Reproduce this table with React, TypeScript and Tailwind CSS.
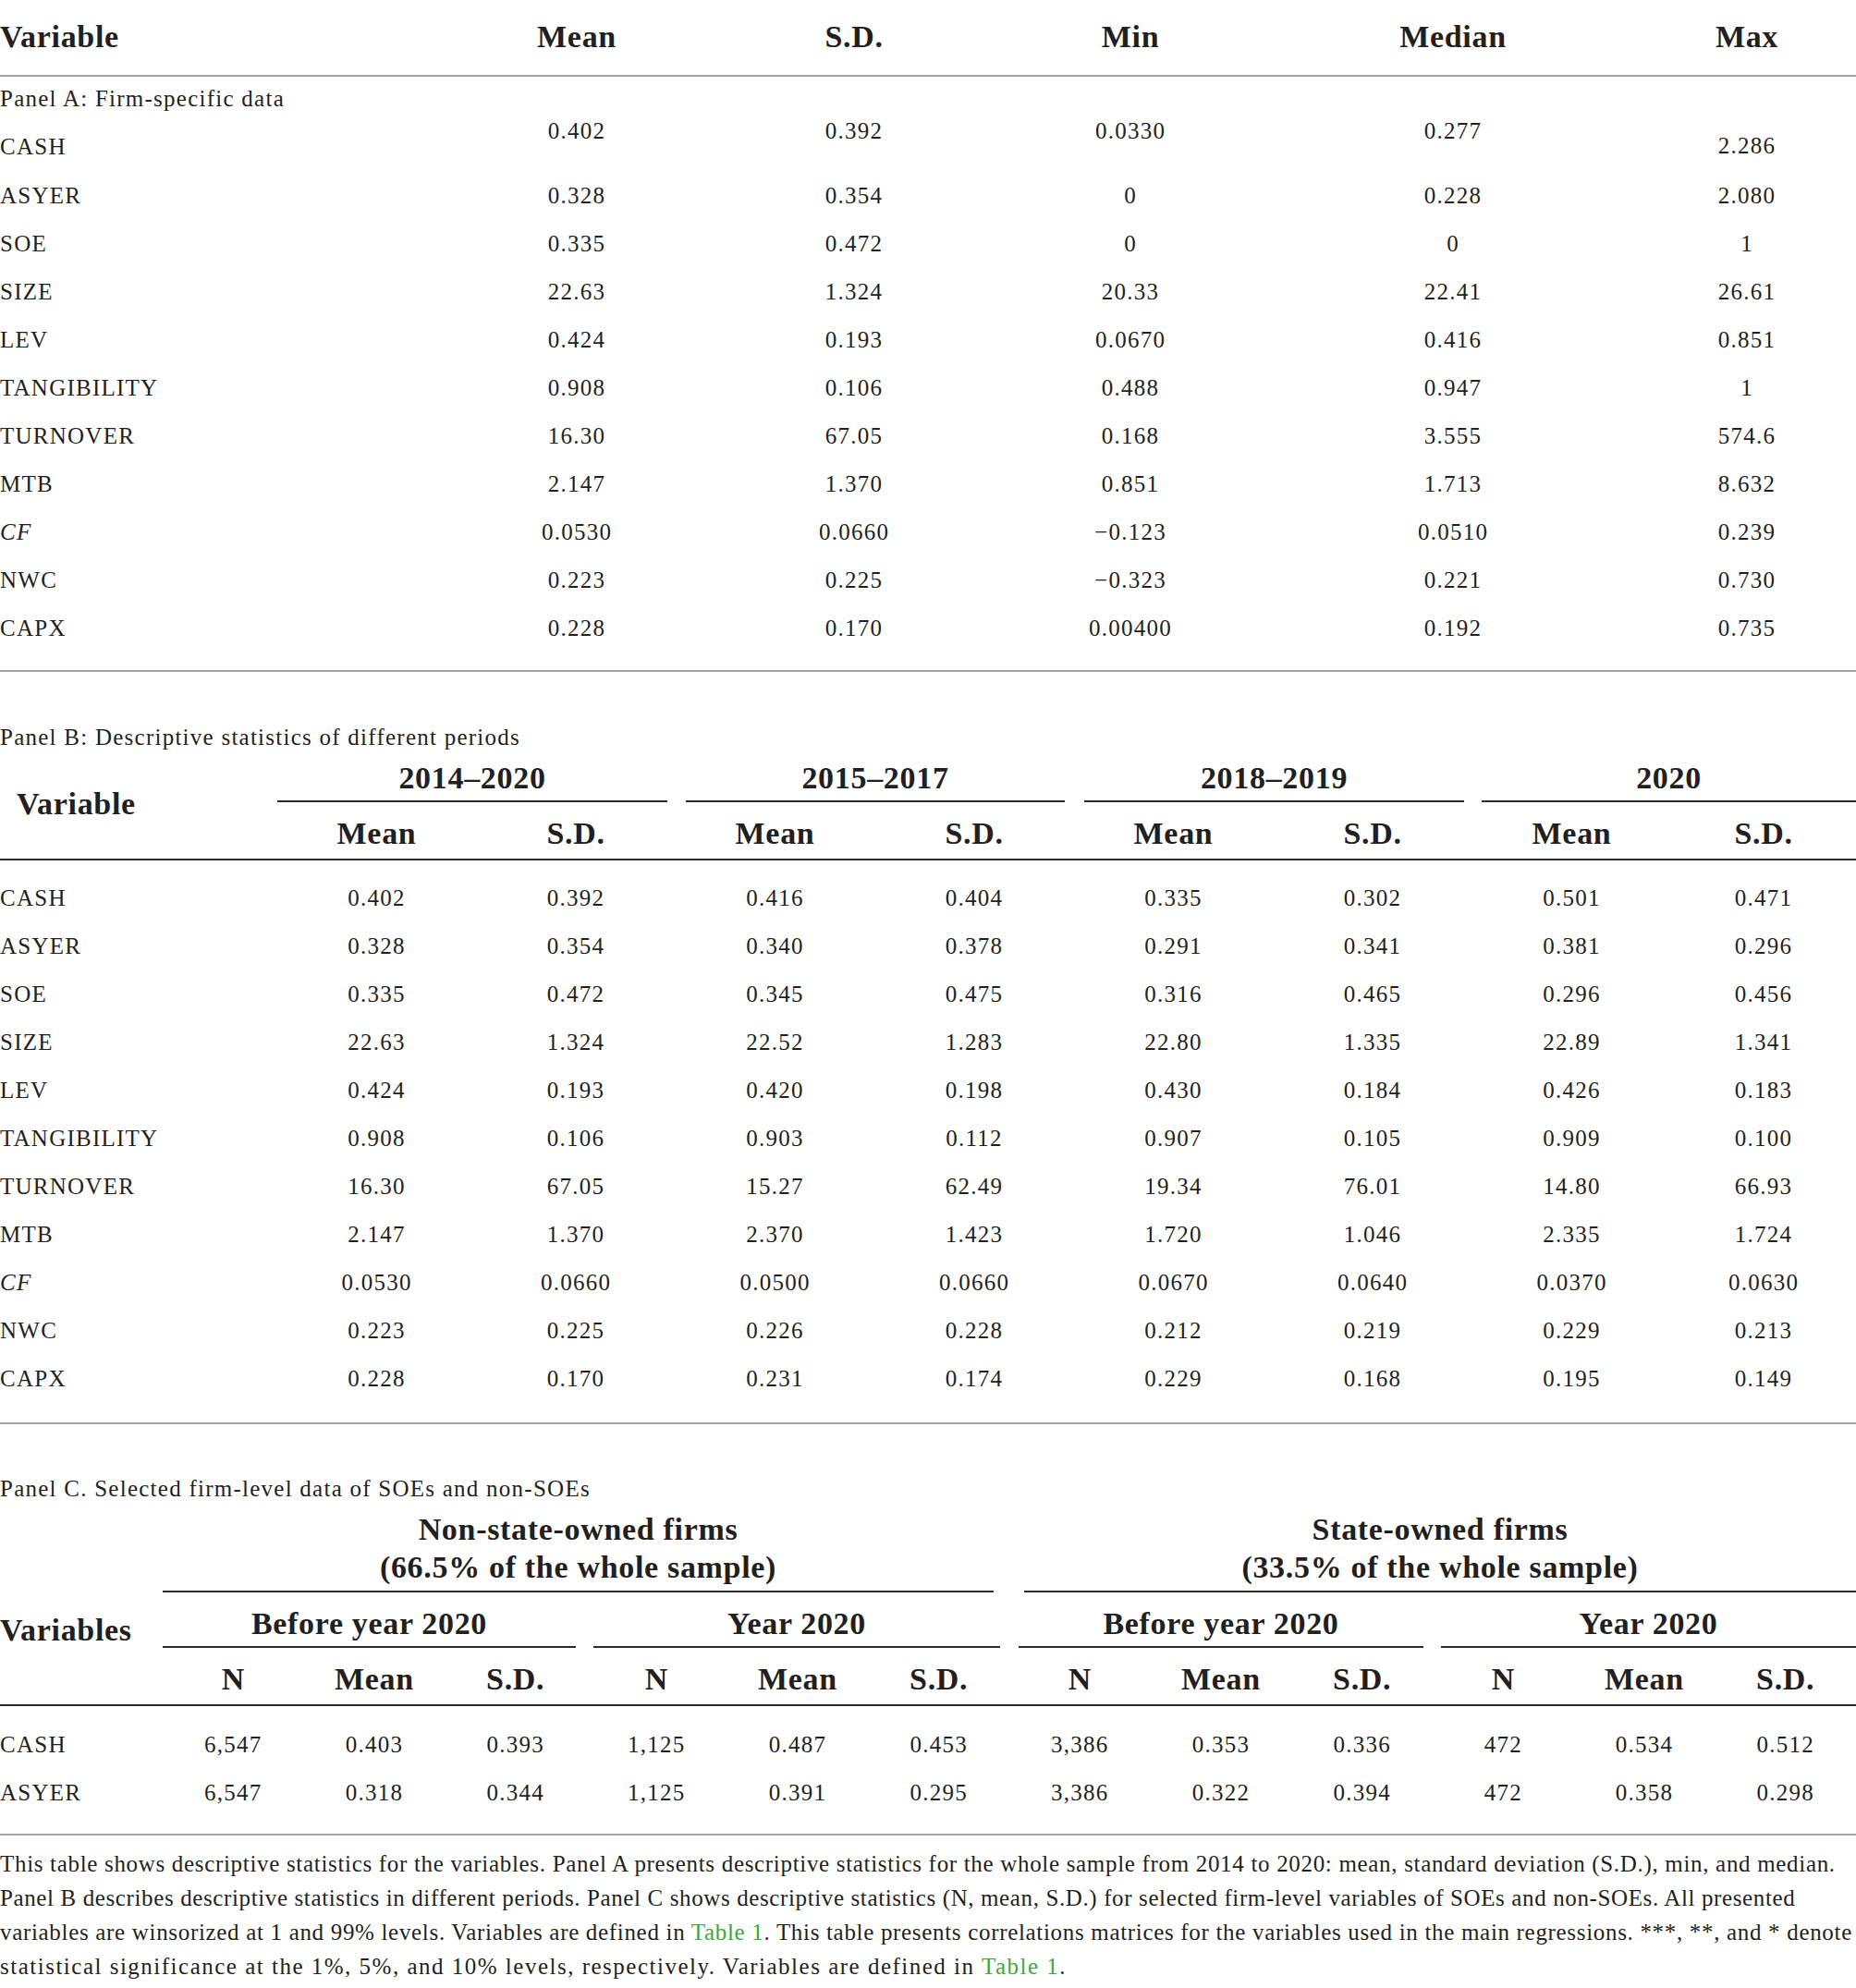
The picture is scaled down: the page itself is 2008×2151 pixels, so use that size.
import React from "react";

const body = "text-[25px] tracking-[0.05em] leading-[30px]";
const head = "text-[34px] font-bold tracking-[0.02em] leading-[40px]";

type Row = { label: string; italic?: boolean; v: string[] };

const panelA: Row[] = [
  { label: "ASYER", v: ["0.328", "0.354", "0", "0.228", "2.080"] },
  { label: "SOE", v: ["0.335", "0.472", "0", "0", "1"] },
  { label: "SIZE", v: ["22.63", "1.324", "20.33", "22.41", "26.61"] },
  { label: "LEV", v: ["0.424", "0.193", "0.0670", "0.416", "0.851"] },
  { label: "TANGIBILITY", v: ["0.908", "0.106", "0.488", "0.947", "1"] },
  { label: "TURNOVER", v: ["16.30", "67.05", "0.168", "3.555", "574.6"] },
  { label: "MTB", v: ["2.147", "1.370", "0.851", "1.713", "8.632"] },
  { label: "CF", italic: true, v: ["0.0530", "0.0660", "\u22120.123", "0.0510", "0.239"] },
  { label: "NWC", v: ["0.223", "0.225", "\u22120.323", "0.221", "0.730"] },
  { label: "CAPX", v: ["0.228", "0.170", "0.00400", "0.192", "0.735"] },
];

const panelB: Row[] = [
  { label: "CASH", v: ["0.402", "0.392", "0.416", "0.404", "0.335", "0.302", "0.501", "0.471"] },
  { label: "ASYER", v: ["0.328", "0.354", "0.340", "0.378", "0.291", "0.341", "0.381", "0.296"] },
  { label: "SOE", v: ["0.335", "0.472", "0.345", "0.475", "0.316", "0.465", "0.296", "0.456"] },
  { label: "SIZE", v: ["22.63", "1.324", "22.52", "1.283", "22.80", "1.335", "22.89", "1.341"] },
  { label: "LEV", v: ["0.424", "0.193", "0.420", "0.198", "0.430", "0.184", "0.426", "0.183"] },
  { label: "TANGIBILITY", v: ["0.908", "0.106", "0.903", "0.112", "0.907", "0.105", "0.909", "0.100"] },
  { label: "TURNOVER", v: ["16.30", "67.05", "15.27", "62.49", "19.34", "76.01", "14.80", "66.93"] },
  { label: "MTB", v: ["2.147", "1.370", "2.370", "1.423", "1.720", "1.046", "2.335", "1.724"] },
  { label: "CF", italic: true, v: ["0.0530", "0.0660", "0.0500", "0.0660", "0.0670", "0.0640", "0.0370", "0.0630"] },
  { label: "NWC", v: ["0.223", "0.225", "0.226", "0.228", "0.212", "0.219", "0.229", "0.213"] },
  { label: "CAPX", v: ["0.228", "0.170", "0.231", "0.174", "0.229", "0.168", "0.195", "0.149"] },
];

const panelC: Row[] = [
  { label: "CASH", v: ["6,547", "0.403", "0.393", "1,125", "0.487", "0.453", "3,386", "0.353", "0.336", "472", "0.534", "0.512"] },
  { label: "ASYER", v: ["6,547", "0.318", "0.344", "1,125", "0.391", "0.295", "3,386", "0.322", "0.394", "472", "0.358", "0.298"] },
];

const gridA = "grid grid-cols-[474px_300px_300px_298px_400px_236px]";
const gridB = "grid grid-cols-[300px_215px_216px_215px_216px_215px_216px_215px_200px]";
const gridC = "grid grid-cols-[176px_repeat(12,minmax(0,1fr))]";

function Label({ r }: { r: Row }) {
  return <div className={`${body} ${r.italic ? "italic" : ""}`}>{r.label}</div>;
}

const green = "text-[#3aa935]";

export default function App() {
  return (
    <div className="w-[2008px] min-h-[2151px] bg-white text-[#231f20] font-['Liberation_Serif','Times_New_Roman',serif]">
      {/* Panel A header */}
      <div className={`${gridA} h-[83px] items-center border-b-2 border-[#a3a3a3] pb-[2px]`}>
        <div className={head}>Variable</div>
        {["Mean", "S.D.", "Min", "Median", "Max"].map((h) => (
          <div key={h} className={`${head} text-center`}>
            {h}
          </div>
        ))}
      </div>

      {/* Panel A body */}
      <div className="border-b-2 border-[#a3a3a3] pb-[19px]">
        <div className={gridA}>
          <div className="flex flex-col">
            <div className={`${body} h-[48px] flex items-center`}>Panel A: Firm-specific data</div>
            <div className={`${body} h-[55px] flex items-center`}>CASH</div>
          </div>
          {["0.402", "0.392", "0.0330", "0.277"].map((v, i) => (
            <div key={i} className={`${body} text-center pt-[44px]`}>
              {v}
            </div>
          ))}
          <div className={`${body} text-center pt-[60px]`}>2.286</div>
        </div>
        {panelA.map((r) => (
          <div key={r.label} className={`${gridA} h-[52px] items-center`}>
            <Label r={r} />
            {r.v.map((v, i) => (
              <div key={i} className={`${body} text-center`}>
                {v}
              </div>
            ))}
          </div>
        ))}
      </div>

      {/* Panel B */}
      <div className={`${body} mt-[51px] h-[40px] flex items-center`}>Panel B: Descriptive statistics of different periods</div>
      <div className={`${gridB} border-b-2 border-[#2b2b2b]`}>
        <div className={`${head} row-span-2 flex items-center pl-[18px] pb-[7px]`}>Variable</div>
        <div className={`${head} col-span-2 h-[50px] flex items-center justify-center border-b-2 border-[#2b2b2b] mr-[9px]`}>2014–2020</div>
        <div className={`${head} col-span-2 h-[50px] flex items-center justify-center border-b-2 border-[#2b2b2b] ml-[11px] mr-[10px]`}>2015–2017</div>
        <div className={`${head} col-span-2 h-[50px] flex items-center justify-center border-b-2 border-[#2b2b2b] ml-[11px] mr-[9px]`}>2018–2019</div>
        <div className={`${head} col-span-2 h-[50px] flex items-center justify-center border-b-2 border-[#2b2b2b] ml-[10px]`}>2020</div>
        {Array.from({ length: 8 }).map((_, i) => (
          <div key={i} className={`${head} h-[61px] pt-[6px] flex items-center justify-center`}>
            {i % 2 === 0 ? "Mean" : "S.D."}
          </div>
        ))}
      </div>
      <div className="pt-[15px] pb-[21px] border-b-2 border-[#a3a3a3]">
        {panelB.map((r) => (
          <div key={r.label} className={`${gridB} h-[52px] items-center`}>
            <Label r={r} />
            {r.v.map((v, i) => (
              <div key={i} className={`${body} text-center`}>
                {v}
              </div>
            ))}
          </div>
        ))}
      </div>

      {/* Panel C */}
      <div className={`${body} mt-[50px] h-[40px] flex items-center`}>Panel C. Selected firm-level data of SOEs and non-SOEs</div>
      <div className={`${gridC} border-b-2 border-[#2b2b2b]`}>
        <div className="h-[92px]" />
        <div className={`col-span-6 h-[92px] pt-[3px] border-b-2 border-[#2b2b2b] mr-[17px] text-center ${head} leading-[41px]`}>
          <div>Non-state-owned firms</div>
          <div>(66.5% of the whole sample)</div>
        </div>
        <div className={`col-span-6 h-[92px] pt-[3px] border-b-2 border-[#2b2b2b] ml-[16px] text-center ${head} leading-[41px]`}>
          <div>State-owned firms</div>
          <div>(33.5% of the whole sample)</div>
        </div>
        <div className={`${head} row-span-2 flex items-center pb-[39px]`}>Variables</div>
        <div className={`${head} col-span-3 h-[60px] pt-[10px] flex items-center justify-center border-b-2 border-[#2b2b2b] mr-[11px]`}>Before year 2020</div>
        <div className={`${head} col-span-3 h-[60px] pt-[10px] flex items-center justify-center border-b-2 border-[#2b2b2b] ml-[8px] mr-[10px]`}>Year 2020</div>
        <div className={`${head} col-span-3 h-[60px] pt-[10px] flex items-center justify-center border-b-2 border-[#2b2b2b] ml-[10px] mr-[10px]`}>Before year 2020</div>
        <div className={`${head} col-span-3 h-[60px] pt-[10px] flex items-center justify-center border-b-2 border-[#2b2b2b] ml-[9px]`}>Year 2020</div>
        {Array.from({ length: 12 }).map((_, i) => (
          <div key={i} className={`${head} h-[61px] pt-[6px] flex items-center justify-center`}>
            {["N", "Mean", "S.D."][i % 3]}
          </div>
        ))}
      </div>
      <div className="pt-[16px] pb-[18px] border-b-2 border-[#a3a3a3]">
        {panelC.map((r) => (
          <div key={r.label} className={`${gridC} h-[52px] items-center`}>
            <Label r={r} />
            {r.v.map((v, i) => (
              <div key={i} className={`${body} text-center`}>
                {v}
              </div>
            ))}
          </div>
        ))}
      </div>

      {/* Footnote */}
      <div className="pt-[12px] text-[25px] leading-[37px] whitespace-nowrap">
        <div className="tracking-[0.68px]">
          This table shows descriptive statistics for the variables. Panel A presents descriptive statistics for the whole sample from 2014 to 2020: mean, standard deviation (S.D.), min, and median.
        </div>
        <div className="tracking-[0.62px]">
          Panel B describes descriptive statistics in different periods. Panel C shows descriptive statistics (N, mean, S.D.) for selected firm-level variables of SOEs and non-SOEs. All presented
        </div>
        <div className="tracking-[0.68px]">
          variables are winsorized at 1 and 99% levels. Variables are defined in <span className={green}>Table 1</span>. This table presents correlations matrices for the variables used in the main regressions. ***, **, and * denote
        </div>
        <div className="tracking-[1.5px]">
          statistical significance at the 1%, 5%, and 10% levels, respectively. Variables are defined in <span className={green}>Table 1</span>.
        </div>
      </div>
    </div>
  );
}
